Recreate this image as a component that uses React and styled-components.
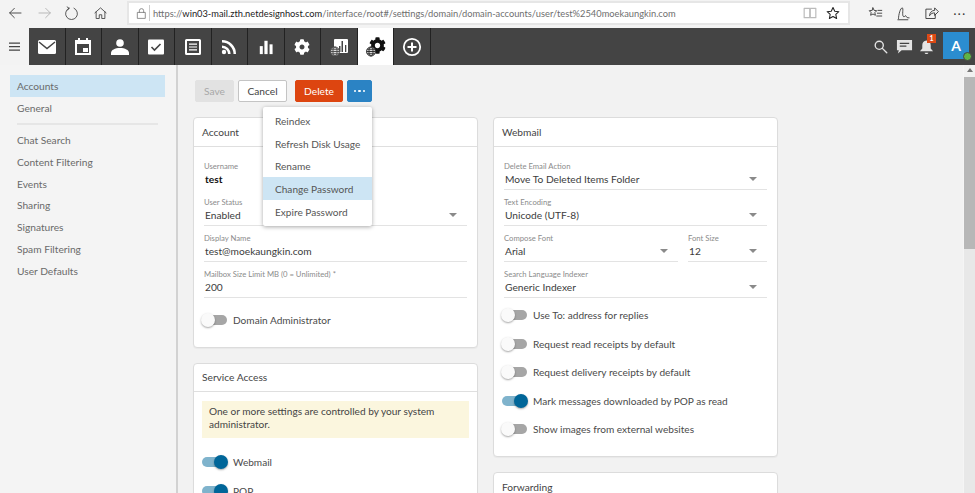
import React from 'react';
import styled, { createGlobalStyle } from 'styled-components';
import { FaCog } from 'react-icons/fa';

const Global = createGlobalStyle`
  html, body { margin: 0; padding: 0; width: 975px; height: 493px; overflow: hidden; background: #f2f2f2; }
  * { box-sizing: border-box; }
  body { font-family: Lato, "Open Sans", "Liberation Sans", sans-serif; color: #444; }
`;

const Page = styled.div`width: 975px; height: 493px; display: flex; flex-direction: column; overflow: hidden;`;
const BrowserBar = styled.div`height: 28px; flex: none; background: #f3f3f3; display: flex; align-items: flex-start; padding-top: 1px; color: #444;`;
const NavButtons = styled.div`width: 127px; height: 24px; flex: none; display: flex; align-items: center;`;
const NavBtn = styled.div`width: ${p => p.$w}px; display: flex; justify-content: center; color: ${p => p.$off ? '#b4b4b4' : '#444'};`;
const Address = styled.div`width: 723px; height: 24px; flex: none; background: #fff; border: 2px solid #e6e6e6; display: flex; align-items: center; padding: 0 4px 0 6px;`;
const Lock = styled.div`width: 15px; height: 16px; flex: none; border-right: 1px solid #ccc; display: flex; align-items: center; color: #777;`;
const Url = styled.div`margin-left: 3px; font-size: 9.3px; white-space: nowrap; color: #6e6e6e; flex: 1;`;
const UrlHost = styled.span`color: #222;`;
const AddrIcon = styled.div`width: 23px; display: flex; justify-content: center; color: ${p => p.$c || '#222'}; flex: none;`;
const BrowserRight = styled.div`flex: 1; height: 24px; display: flex; align-items: center; padding-left: 15px; gap: 8px; color: #333;`;
const BrowserIcon = styled.div`width: 20px; display: flex; justify-content: center;`;
const MoreGlyph = styled(BrowserIcon)`font-size: 11px; margin-left: 1px; letter-spacing: 1.5px;`;

const TopNav = styled.div`height: 37px; flex: none; display: flex; background: #f3f3f3;`;
const Burger = styled.div`width: 29px; display: flex; align-items: center; justify-content: center; padding-bottom: 1px; color: #444;`;
const NavDark = styled.div`flex: 1; background: #444; display: flex; align-items: stretch; color: #fff;`;
const Tab = styled.div`width: 36.5px; flex: none; display: flex; align-items: center; justify-content: center; border-right: 1px solid #222; background: ${p => p.$active ? '#fff' : 'transparent'}; color: ${p => p.$active ? '#111' : '#fff'};`;
const NavSpacer = styled.div`flex: 1;`;
const NavTool = styled.div`width: 22px; display: flex; align-items: center; justify-content: center; position: relative; color: #e4e4e4;`;
const Badge = styled.span`position: absolute; top: 6px; right: 1px; width: 9px; height: 9px; background: #dd4a16; color: #fff; font-size: 7px; font-weight: 700; line-height: 9px; text-align: center;`;
const Avatar = styled.div`width: 26px; height: 27px; margin: 4px 6px 0 6px; background: #2b8dd0; color: #fff; font-weight: 700; font-size: 14px; display: flex; align-items: center; justify-content: center; position: relative;`;
const Presence = styled.span`position: absolute; right: -3px; bottom: -2px; width: 9px; height: 9px; border-radius: 50%; background: #5fb346; border: 1px solid #444;`;

const Body = styled.div`flex: 1; display: flex; min-height: 0;`;
const Side = styled.aside`width: 178px; flex: none; background: #f4f4f4; border-right: 2px solid #d2d2d2; padding: 10px 10px 0;`;
const SideItem = styled.div`height: 21.8px; padding: 1px 0 0 7px; display: flex; align-items: center; font-size: 10.2px; color: #6a6a6a; background: ${p => p.$active ? '#cde5f4' : 'transparent'}; margin-right: 1px;`;
const SideRule = styled.div`height: 2px; background: #e6e6e6; margin: 4px 8px 4px 7px;`;
const Main = styled.main`flex: 1; padding: 15px 0 0 15px; overflow: hidden; position: relative; background: #f2f2f2;`;
const Toolbar = styled.div`height: 22px; display: flex; margin: 0 0 15px 2px;`;
const Button = styled.div`height: 22px; width: ${p => p.$w}px; margin-right: ${p => p.$mr || 0}px; border-radius: 2px; display: flex; align-items: center; justify-content: center; font-size: 10.2px;
  background: ${p => p.$bg}; color: ${p => p.$fg}; border: 1px solid ${p => p.$bd || p.$bg};`;
const Dots = styled.div`display: flex; gap: 2px;`;
const Dot = styled.i`width: 2.5px; height: 2.5px; background: #fff; border-radius: 50%; display: block;`;
const Menu = styled.div`position: absolute; left: 85px; top: 42px; width: 109px; background: #fff; padding: 2px 0 3px; box-shadow: 0 1px 4px rgba(0,0,0,.35); border-radius: 2px; z-index: 3;`;
const MenuItem = styled.div`height: 22.8px; padding: 1px 0 0 12px; display: flex; align-items: center; font-size: 10.1px; color: #555; background: ${p => p.$active ? '#cde5f4' : 'transparent'}; white-space: nowrap;`;

const Columns = styled.div`display: flex; gap: 15px; align-items: flex-start;`;
const Column = styled.div`width: 285px; flex: none; display: flex; flex-direction: column; gap: 15px;`;
const Card = styled.section`background: #fff; border: 1px solid #dcdcdc; border-radius: 4px; height: ${p => p.$h ? p.$h + 'px' : 'auto'}; box-shadow: 0 1px 1px rgba(0,0,0,.04);`;
const CardHead = styled.header`height: ${p => p.$h || 28}px; border-bottom: 1px solid #dfdfdf; padding: 0 0 1px 8px; display: flex; align-items: center; font-size: 10.2px; color: #444;`;
const CardBody = styled.div`padding: 14px 10px 0 10px;`;
const NoticeBody = styled.div`padding: 9px 8px 0 8px;`;
const ToggleGroup = styled.div`padding-left: 2px;`;
const Field = styled.div`height: ${p => p.$h || 29}px; margin-bottom: ${p => p.$mb ?? 7}px; flex: ${p => p.$flex || 'none'}; border-bottom: ${p => p.$plain ? 'none' : '1px solid #e3e3e3'}; position: relative;`;
const Label = styled.div`font-size: 7.7px; line-height: 11px; color: #8b8b8b; white-space: nowrap;`;
const Value = styled.div`font-size: 10.2px; line-height: 14px; padding-left: 1px; font-weight: ${p => p.$bold ? 700 : 400}; color: ${p => p.$bold ? '#111' : '#3c3c3c'}; white-space: nowrap;`;
const Caret = styled.span`position: absolute; right: 10px; bottom: 8px; width: 0; height: 0; border-left: 4px solid transparent; border-right: 4px solid transparent; border-top: 4px solid #8a8a8a;`;
const FieldRow = styled.div`display: flex; gap: 10px;`;
const ToggleRow = styled.div`height: 28.5px; display: flex; align-items: center; font-size: 10.1px; color: #4a4a4a; white-space: nowrap;`;
const Track = styled.div`width: 25px; height: 10px; border-radius: 5px; background: ${p => p.$on ? '#7fb3cc' : '#a6a6a6'}; position: relative; margin: 0 6px 0 -2px; flex: none;`;
const Knob = styled.div`position: absolute; top: -2px; ${p => p.$on ? 'right: -1px' : 'left: -1px'}; width: 14px; height: 14px; border-radius: 50%; background: ${p => p.$on ? '#006699' : '#fafafa'}; box-shadow: 0 1px 2px rgba(0,0,0,.35);`;
const Notice = styled.div`background: #fbf6de; padding: 4px 7px; font-size: 10.1px; line-height: 13.4px; color: #444; height: 37px; margin-bottom: 10px;`;
const Scrollbar = styled.div`width: 12px; flex: none; background: #e8e8e8; border-left: 1px solid #f5f5f5; display: flex; flex-direction: column;`;
const ScrollTop = styled.div`height: 12px; flex: none; background: #f1f1f1; display: flex; justify-content: center; padding-top: 3px;`;
const ScrollUp = styled.div`width: 0; height: 0; border-left: 3px solid transparent; border-right: 3px solid transparent; border-bottom: 4px solid #777;`;
const Thumb = styled.div`height: 172px; background: #b7b7b7; flex: none;`;

const Toggle = ({ on, children }) => (
  <ToggleRow><Track $on={on}><Knob $on={on} /></Track>{children}</ToggleRow>
);
const Select = ({ label, value, h, flex, mb }) => (
  <Field $h={h} $flex={flex} $mb={mb}><Label>{label}</Label><Value>{value}</Value><Caret /></Field>
);
const S = ({ w = 18, h = 18, vb = '0 0 24 24', children, ...r }) => <svg width={w} height={h} viewBox={vb} fill="currentColor" {...r}>{children}</svg>;
const Line = { fill: 'none', stroke: 'currentColor', strokeWidth: 1.4, strokeLinecap: 'round', strokeLinejoin: 'round' };

const Globe = ({ x, y, r = 4.5, c = '#222' }) => (
  <g fill="none" stroke={c} strokeWidth=".9">
    <circle cx={x} cy={y} r={r} fill="#ddd" />
    <ellipse cx={x} cy={y} rx={r / 2.2} ry={r} />
    <path d={`M${x - r} ${y}h${2 * r}M${x - r + .6} ${y - r / 2}h${2 * r - 1.2}M${x - r + .6} ${y + r / 2}h${2 * r - 1.2}`} />
  </g>
);

const Icons = {
  mail: <S w={20} h={18} vb="0 0 20 18"><rect x="1" y="2" width="18" height="14" rx="1.5" /><path d="M2 4l8 6.5L18 4" fill="none" stroke="#444" strokeWidth="1.5" /></S>,
  cal: <S w={18} h={19} vb="0 0 18 19"><path fillRule="evenodd" d="M1 3h3V1h2v2h6V1h2v2h3v15H1zM3 7v9h12V7z" /><rect x="9" y="11" width="5" height="4" /></S>,
  person: <S w={20} h={18} vb="0 0 20 18"><circle cx="10" cy="5" r="3.8" /><path d="M1 17v-2c0-3 4-5 9-5s9 2 9 5v2z" /></S>,
  check: <S w={18} h={18} vb="0 0 18 18"><rect x="1" y="1.5" width="16" height="15" rx="1" /><path d="M4.5 9l3 3 6-6" fill="none" stroke="#444" strokeWidth="1.6" /></S>,
  list: <S w={18} h={18} vb="0 0 18 18"><path fillRule="evenodd" d="M2.5 1h13A1.5 1.5 0 0 1 17 2.5v13a1.500 1.500 0 0 1-1.500 1.500h-13A1.500 1.500 0 0 1 1 15.500v-13A1.500 1.500 0 0 1 2.500 1zM3 3v12h12V3z" /><path d="M5 5.500h8v1.200H5zM5 8.400h8v1.200H5zM5 11.300h8v1.200H5z" /></S>,
  rss: <S w={18} h={18} vb="0 0 18 18"><circle cx="4" cy="14" r="2.200" /><path d="M2 7.500v2.600a6 6 0 0 1 6 6h2.600A8.600 8.600 0 0 0 2 7.500z" /><path d="M2 2v2.600A11.500 11.500 0 0 1 13.500 16H16A14 14 0 0 0 2 2z" /></S>,
  bars: <S w={16} h={16} vb="0 0 18 18"><rect x="2" y="8" width="3.400" height="9" /><rect x="7.200" y="2" width="3.600" height="15" /><rect x="13" y="6" width="3.400" height="11" /></S>,
  gear: <FaCog size={16} />,
  report: <S w={20} h={20} vb="0 0 20 20"><rect x="5" y="2" width="14" height="14" rx="1" /><path d="M10 9h1.500v6H10zM12.500 4H14v11h-1.500zM16 8h1.300v7H16z" fill="#444" /><Globe x={6} y={14.500} r={4.500} c="#444" /></S>,
  domainGear: <svg width="21" height="20" viewBox="0 0 21 20"><foreignObject x="4" y="0" width="17" height="17"><FaCog size={17} color="#111" /></foreignObject><Globe x={6} y={14.500} r={4.500} /></svg>,
  plus: <S w={20} h={20} vb="0 0 20 20"><circle cx="10" cy="10" r="8.200" fill="none" stroke="currentColor" strokeWidth="1.800" /><path d="M9 5.500h2V9h3.500v2H11v3.500H9V11H5.500V9H9z" /></S>,
};

const tabs = ['mail', 'cal', 'person', 'check', 'list', 'rss', 'bars', 'gear', 'report', 'domainGear', 'plus'];

export default function App() {
  return (
    <Page>
      <Global />
      <BrowserBar>
        <NavButtons>
          <NavBtn $w={30}><S w={16} h={16} style={Line}><path d="M21 12H4M11 5l-7 7 7 7" /></S></NavBtn>
          <NavBtn $w={29} $off><S w={16} h={16} style={Line}><path d="M3 12h17M13 5l7 7-7 7" /></S></NavBtn>
          <NavBtn $w={25}><S w={15} h={15} style={Line}><path d="M8 3.500a9.500 9.500 0 1 0 8 0M8 3.500L5 1.500M8 3.500L6 6.500" /></S></NavBtn>
          <NavBtn $w={32}><S w={15} h={15} style={Line}><path d="M3 11l9-8 9 8M5 9.500V20h5v-6h4v6h5V9.500" /></S></NavBtn>
        </NavButtons>
        <Address>
          <Lock><S w={13} h={13} style={{ ...Line, strokeWidth: 1.500 }}><rect x="5" y="10" width="14" height="11" /><path d="M8 10V7a4 4 0 0 1 8 0v3" /></S></Lock>
          <Url>https://<UrlHost>win03-mail.zth.netdesignhost.com</UrlHost>/interface/root#/settings/domain/domain-accounts/user/test%2540moekaungkin.com</Url>
          <AddrIcon $c="#bbb"><S w={14} h={14} style={{ ...Line, strokeWidth: 2 }}><path d="M2 4h9.500v16H2zM12.500 4H22v16h-9.500z" /></S></AddrIcon>
          <AddrIcon><S w={14} h={14} style={{ ...Line, strokeWidth: 1.800 }}><path d="M12 2.500l3 6.500 7 .8-5.200 4.700 1.400 7L12 17.900 5.800 21.500l1.400-7L2 9.800 9 9z" /></S></AddrIcon>
        </Address>
        <BrowserRight>
          <BrowserIcon><S w={15} h={15} style={Line}><path d="M8 3l1.800 4 4.200.5-3 3 .8 4.300L8 12.800l-3.800 2 .8-4.300-3-3L6.200 7zM16 7h6M15 11.500h7M14 16h8" /></S></BrowserIcon>
          <BrowserIcon><S w={15} h={15} style={Line}><path d="M4 20c0-6 3-17 6-17 2.500 0 -1 12 2 14 2 1 3-3 4-1s1 3 5 3M3 22h16" /></S></BrowserIcon>
          <BrowserIcon><S w={15} h={15} style={Line}><path d="M12 5H3v15h15v-6M9 15c0-5 4-8 8-8V3l6 6-6 6v-4c-3 0-6 1-8 4z" /></S></BrowserIcon>
          <MoreGlyph>···</MoreGlyph>
        </BrowserRight>
      </BrowserBar>

      <TopNav>
        <Burger><S w={13} h={11} vb="0 0 13 11"><path d="M1 1.500h11v1.200H1zM1 5h11v1.200H1zM1 8.500h11v1.200H1z" /></S></Burger>
        <NavDark>
          {tabs.map(t => <Tab key={t} $active={t === 'domainGear'}>{Icons[t]}</Tab>)}
          <NavSpacer />
          <NavTool><S w={15} h={15} style={{ ...Line, strokeWidth: 2.200, marginRight: 3 }}><circle cx="10" cy="10" r="6.500" /><path d="M15 15l7 7" /></S></NavTool>
          <NavTool><S w={17} h={17} vb="0 0 18 18"><path fillRule="evenodd" d="M1 2h16v11H6l-4 3.500L3 13H1z" /><path d="M4 5h10v1.300H4zM4 8h7v1.300H4z" fill="#444" /></S></NavTool>
          <NavTool>
            <S w={15} h={16} vb="0 0 16 17"><path d="M8 1.500c3 0 4.500 2.500 4.500 5v3.500L15 13H1l2.500-3V6.500C3.500 4 5 1.500 8 1.500zM6 14.500h4c0 2-4 2-4 0z" /></S>
            <Badge>1</Badge>
          </NavTool>
          <Avatar>A<Presence /></Avatar>
        </NavDark>
      </TopNav>

      <Body>
        <Side>
          <SideItem $active>Accounts</SideItem>
          <SideItem>General</SideItem>
          <SideRule />
          <SideItem>Chat Search</SideItem>
          <SideItem>Content Filtering</SideItem>
          <SideItem>Events</SideItem>
          <SideItem>Sharing</SideItem>
          <SideItem>Signatures</SideItem>
          <SideItem>Spam Filtering</SideItem>
          <SideItem>User Defaults</SideItem>
        </Side>
        <Main>
          <Toolbar>
            <Button $w={39} $mr={4} $bg="#e2e2e2" $fg="#a8a8a8">Save</Button>
            <Button $w={49} $mr={8} $bg="#fff" $fg="#444" $bd="#c4c4c4">Cancel</Button>
            <Button $w={48} $mr={4} $bg="#dd4510" $fg="#fff">Delete</Button>
            <Button $w={25} $bg="#2b83c4"><Dots><Dot /><Dot /><Dot /></Dots></Button>
          </Toolbar>
          <Menu>
            <MenuItem>Reindex</MenuItem>
            <MenuItem>Refresh Disk Usage</MenuItem>
            <MenuItem>Rename</MenuItem>
            <MenuItem $active>Change Password</MenuItem>
            <MenuItem>Expire Password</MenuItem>
          </Menu>
          <Columns>
            <Column>
              <Card $h={231}>
                <CardHead $h={29}>Account</CardHead>
                <CardBody>
                  <Field $plain $h={29} $mb={7}><Label>Username</Label><Value $bold>test</Value></Field>
                  <Select label="User Status" value="Enabled" h={29} />
                  <Field $h={29}><Label>Display Name</Label><Value>test@moekaungkin.com</Value></Field>
                  <Field $h={29} $mb={8}><Label>Mailbox Size Limit MB (0 = Unlimited) *</Label><Value>200</Value></Field>
                  <Toggle>Domain Administrator</Toggle>
                </CardBody>
              </Card>
              <Card>
                <CardHead>Service Access</CardHead>
                <NoticeBody>
                  <Notice>One or more settings are controlled by your system administrator.</Notice>
                  <ToggleGroup>
                    <Toggle on>Webmail</Toggle>
                    <Toggle on>POP</Toggle>
                    <Toggle on>IMAP</Toggle>
                  </ToggleGroup>
                </NoticeBody>
              </Card>
            </Column>
            <Column>
              <Card $h={340}>
                <CardHead $h={29}>Webmail</CardHead>
                <CardBody>
                  <Select label="Delete Email Action" value="Move To Deleted Items Folder" />
                  <Select label="Text Encoding" value="Unicode (UTF-8)" />
                  <FieldRow>
                    <Select label="Compose Font" value="Arial" flex="0 0 174px" />
                    <Select label="Font Size" value="12" flex="1" />
                  </FieldRow>
                  <Select label="Search Language Indexer" value="Generic Indexer" mb={3} />
                  <Toggle>Use To: address for replies</Toggle>
                  <Toggle>Request read receipts by default</Toggle>
                  <Toggle>Request delivery receipts by default</Toggle>
                  <Toggle on>Mark messages downloaded by POP as read</Toggle>
                  <Toggle>Show images from external websites</Toggle>
                </CardBody>
              </Card>
              <Card>
                <CardHead $h={29}>Forwarding</CardHead>
              </Card>
            </Column>
          </Columns>
        </Main>
        <Scrollbar><ScrollTop><ScrollUp /></ScrollTop><Thumb /></Scrollbar>
      </Body>
    </Page>
  );
}
